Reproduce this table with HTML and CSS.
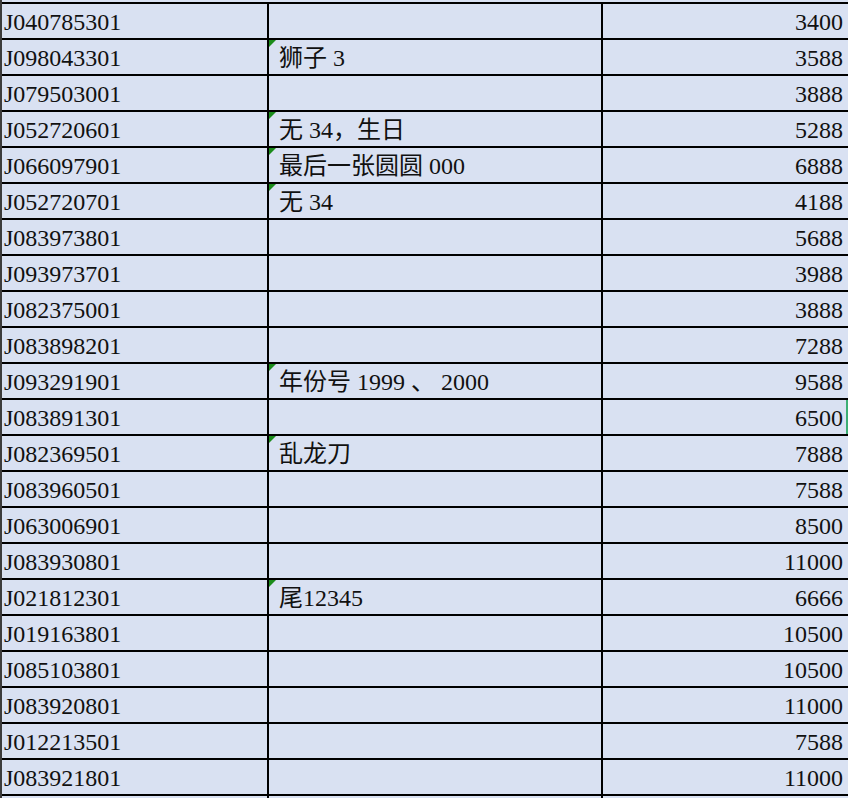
FILE: index.html
```html
<!DOCTYPE html>
<html>
<head>
<meta charset="utf-8">
<link rel="stylesheet" href="styles.css">
</head>
<body>
<div class="sheet">
  <div class="row"><div class="c1">J040785301</div><div class="c2"></div><div class="c3">3400</div></div>
  <div class="row"><div class="c1">J098043301</div><div class="c2 note">狮子 3</div><div class="c3">3588</div></div>
  <div class="row"><div class="c1">J079503001</div><div class="c2"></div><div class="c3">3888</div></div>
  <div class="row"><div class="c1">J052720601</div><div class="c2 note">无 34，生日</div><div class="c3">5288</div></div>
  <div class="row"><div class="c1">J066097901</div><div class="c2 note">最后一张圆圆 000</div><div class="c3">6888</div></div>
  <div class="row"><div class="c1">J052720701</div><div class="c2 note">无 34</div><div class="c3">4188</div></div>
  <div class="row"><div class="c1">J083973801</div><div class="c2"></div><div class="c3">5688</div></div>
  <div class="row"><div class="c1">J093973701</div><div class="c2"></div><div class="c3">3988</div></div>
  <div class="row"><div class="c1">J082375001</div><div class="c2"></div><div class="c3">3888</div></div>
  <div class="row"><div class="c1">J083898201</div><div class="c2"></div><div class="c3">7288</div></div>
  <div class="row"><div class="c1">J093291901</div><div class="c2 note">年份号 1999 、 2000</div><div class="c3">9588</div></div>
  <div class="row"><div class="c1">J083891301</div><div class="c2"></div><div class="c3 selected">6500</div></div>
  <div class="row"><div class="c1">J082369501</div><div class="c2 note">乱龙刀</div><div class="c3">7888</div></div>
  <div class="row"><div class="c1">J083960501</div><div class="c2"></div><div class="c3">7588</div></div>
  <div class="row"><div class="c1">J063006901</div><div class="c2"></div><div class="c3">8500</div></div>
  <div class="row"><div class="c1">J083930801</div><div class="c2"></div><div class="c3">11000</div></div>
  <div class="row"><div class="c1">J021812301</div><div class="c2 note">尾12345</div><div class="c3">6666</div></div>
  <div class="row"><div class="c1">J019163801</div><div class="c2"></div><div class="c3">10500</div></div>
  <div class="row"><div class="c1">J085103801</div><div class="c2"></div><div class="c3">10500</div></div>
  <div class="row"><div class="c1">J083920801</div><div class="c2"></div><div class="c3">11000</div></div>
  <div class="row"><div class="c1">J012213501</div><div class="c2"></div><div class="c3">7588</div></div>
  <div class="row"><div class="c1">J083921801</div><div class="c2"></div><div class="c3">11000</div></div>
  <div class="row last"><div class="c1"></div><div class="c2"></div><div class="c3"></div></div>
</div>
</body>
</html>
```
FILE: styles.css
```css
html, body {
  margin: 0;
  padding: 0;
  background: #d9e1f2;
  overflow: hidden;
}
.sheet {
  width: 848px;
  height: 798px;
  overflow: hidden;
  padding-top: 2px;
  box-sizing: border-box;
  border-left: 2px solid #3c3c3c;
  font-family: "Liberation Serif", "Noto Sans CJK SC", serif;
  font-size: 24px;
  color: #111;
}
.row {
  display: grid;
  grid-template-columns: 265px 2px 332px 2px 1fr;
  border-top: 2px solid #000;
  height: 34px;
  line-height: 34px;
}
.row.last {
  height: 10px;
}
.c1 {
  grid-column: 1;
  padding-left: 2px;
  padding-top: 1px;
  white-space: nowrap;
}
.c2 {
  grid-column: 3;
  position: relative;
  padding-left: 10px;
  padding-top: 1px;
  white-space: nowrap;
  border-left: 2px solid #000;
  margin-left: -2px;
}
.c3 {
  grid-column: 5;
  text-align: right;
  padding-right: 5px;
  padding-top: 1px;
  border-left: 2px solid #000;
  margin-left: -2px;
  position: relative;
}
.note::before {
  content: "";
  position: absolute;
  left: 0;
  top: 0;
  width: 0;
  height: 0;
  border-top: 7px solid #1b8c1b;
  border-right: 7px solid transparent;
}
.selected::after {
  content: "";
  position: absolute;
  right: 0;
  top: 0;
  width: 2px;
  height: 34px;
  background: #3cae74;
}
```
